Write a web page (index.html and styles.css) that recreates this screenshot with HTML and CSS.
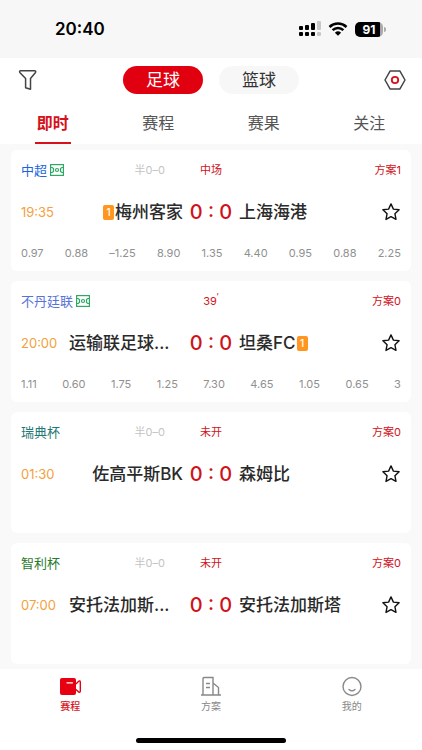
FILE: index.html
```html
<!DOCTYPE html>
<html lang="zh-CN">
<head>
    <meta charset="UTF-8">
    <meta name="viewport" content="width=device-width, initial-scale=1.0">
    <title>赛程</title>
    <link rel="stylesheet" href="styles.css">
</head>
<body>
    <!-- Shared icons -->
    <svg class="sprite" aria-hidden="true">
        <symbol id="icon-star" viewBox="0 0 20 20">
            <path d="M10 1.900l2.400 5.200 5.700.7-4.200 3.900 1.100 5.700L10 14.600l-5 2.800 1.100-5.700-4.200-3.900 5.700-.7z" fill="none" stroke="#111" stroke-width="1.400" stroke-linejoin="round"/>
        </symbol>
        <symbol id="icon-pitch" viewBox="0 0 14 12">
            <g fill="none" stroke="#2fa866" stroke-width="1.200">
                <rect x=".6" y=".6" width="12.800" height="10.800"/>
                <path d="M.6 3.500h1.600l1.300 1v3l-1.300 1H.6M13.400 3.500h-1.600l-1.300 1v3l1.300 1h1.600"/>
                <circle cx="7" cy="6" r="1.500"/>
            </g>
        </symbol>
    </svg>

    <div class="status-bar">
        <span class="clock">20:40</span>
        <div class="status-icons">
            <svg width="22" height="16" viewBox="0 0 22 16">
                <rect x="0" y="5" width="4" height="4" rx="1"/>
                <rect x="6" y="4" width="4" height="5" rx="1"/>
                <rect x="12" y="2" width="4" height="7" rx="1"/>
                <rect x="18" y="0" width="4" height="9" rx="1" fill="#c8c8c8"/>
                <rect x="0" y="11" width="4" height="4" rx="1"/>
                <rect x="6" y="11" width="4" height="4" rx="1"/>
                <rect x="12" y="11" width="4" height="4" rx="1"/>
                <rect x="18" y="11" width="4" height="4" rx="1" fill="#c8c8c8"/>
            </svg>
            <svg width="20" height="14" viewBox="0 0 20 14">
                <path d="M1.500 5a12.300 12.300 0 0 1 17 0M4.600 8.200a7.800 7.800 0 0 1 10.800 0" fill="none" stroke="#000" stroke-width="2.500"/>
                <path d="M10 13.800L6.900 10.700a4.500 4.500 0 0 1 6.200 0z"/>
            </svg>
            <div class="battery">91</div>
        </div>
    </div>

    <header class="header">
        <div class="toolbar">
            <button class="icon-btn" aria-label="筛选">
                <svg width="22" height="22" viewBox="0 0 22 22">
                    <path d="M4.500 1.800h14.200c.9 0 1.300.9.800 1.600L14.500 9.500v10.800l-4.900-1.600V9.500L3.800 3.400c-.5-.7-.1-1.600.7-1.600z" fill="none" stroke="#444" stroke-width="1.500" stroke-linejoin="round"/>
                </svg>
            </button>
            <div class="sports">
                <button class="sport active">足球</button>
                <button class="sport">篮球</button>
            </div>
            <button class="icon-btn" aria-label="设置">
                <svg width="22" height="22" viewBox="0 0 22 22">
                    <path d="M6.200 1.900h9.600L21 11l-5.200 9.100H6.200L1 11z" fill="none" stroke="#444" stroke-width="1.500" stroke-linejoin="round"/>
                    <circle cx="11" cy="11" r="3.200" fill="none" stroke="#d7111b" stroke-width="1.800"/>
                </svg>
            </button>
        </div>
        <nav class="tabs">
            <a class="tab active" href="#">即时</a>
            <a class="tab" href="#">赛程</a>
            <a class="tab" href="#">赛果</a>
            <a class="tab" href="#">关注</a>
        </nav>
    </header>

    <main class="matches">
        <section class="match">
            <div class="info">
                <div class="info-left">
                    <span class="league league-csl">中超 <svg class="pitch"><use href="#icon-pitch"/></svg></span>
                    <span class="half">半0–0</span>
                </div>
                <span class="state">中场</span>
                <a class="plans" href="#">方案1</a>
            </div>
            <div class="teams">
                <span class="time">19:35</span>
                <span class="team home"><span class="rank">1</span>梅州客家</span>
                <span class="score">0 : 0</span>
                <span class="team">上海海港</span>
                <button class="star" aria-label="关注"><svg><use href="#icon-star"/></svg></button>
            </div>
            <div class="odds">
                <span>0.97</span>
                <span>0.88</span>
                <span>–1.25</span>
                <span>8.90</span>
                <span>1.35</span>
                <span>4.40</span>
                <span>0.95</span>
                <span>0.88</span>
                <span>2.25</span>
            </div>
        </section>

        <section class="match">
            <div class="info">
                <div class="info-left">
                    <span class="league league-bhutan">不丹廷联 <svg class="pitch"><use href="#icon-pitch"/></svg></span>
                </div>
                <span class="state">39<sup class="minute">′</sup></span>
                <a class="plans" href="#">方案0</a>
            </div>
            <div class="teams">
                <span class="time">20:00</span>
                <span class="team">运输联足球...</span>
                <span class="score">0 : 0</span>
                <span class="team">坦桑FC<span class="rank">1</span></span>
                <button class="star" aria-label="关注"><svg><use href="#icon-star"/></svg></button>
            </div>
            <div class="odds">
                <span>1.11</span>
                <span>0.60</span>
                <span>1.75</span>
                <span>1.25</span>
                <span>7.30</span>
                <span>4.65</span>
                <span>1.05</span>
                <span>0.65</span>
                <span>3</span>
            </div>
        </section>

        <section class="match">
            <div class="info">
                <div class="info-left">
                    <span class="league league-sweden">瑞典杯</span>
                    <span class="half">半0–0</span>
                </div>
                <span class="state">未开</span>
                <a class="plans" href="#">方案0</a>
            </div>
            <div class="teams">
                <span class="time">01:30</span>
                <span class="team home">佐高平斯BK</span>
                <span class="score">0 : 0</span>
                <span class="team">森姆比</span>
                <button class="star" aria-label="关注"><svg><use href="#icon-star"/></svg></button>
            </div>
        </section>

        <section class="match">
            <div class="info">
                <div class="info-left">
                    <span class="league league-chile">智利杯</span>
                    <span class="half">半0–0</span>
                </div>
                <span class="state">未开</span>
                <a class="plans" href="#">方案0</a>
            </div>
            <div class="teams">
                <span class="time">07:00</span>
                <span class="team">安托法加斯...</span>
                <span class="score">0 : 0</span>
                <span class="team">安托法加斯塔</span>
                <button class="star" aria-label="关注"><svg><use href="#icon-star"/></svg></button>
            </div>
        </section>
    </main>

    <footer class="footer">
        <nav class="bottom-nav">
            <a class="nav-item active" href="#">
                <svg width="22" height="22" viewBox="0 0 22 22">
                    <rect x="1" y="2" width="16" height="17" rx="2" fill="#e60012"/>
                    <path d="M8 6.800h5.500" stroke="#fff" stroke-width="1.300" stroke-linecap="round"/>
                    <path d="M17 8l2.700-2.800c.6-.6 1.600-.2 1.600.7v9.400c0 .9-1 1.300-1.600.7L17 13.500" fill="none" stroke="#e60012" stroke-width="1.400"/>
                </svg>
                <span>赛程</span>
            </a>
            <a class="nav-item" href="#">
                <svg width="22" height="22" viewBox="0 0 22 22">
                    <path d="M3 19V2.500c0-.6.400-1 1-1h9v17.500M13 7l5.500 4.500V19M1 19h20M6 7.500h4M6 11.500h4" fill="none" stroke="#888" stroke-width="1.400"/>
                </svg>
                <span>方案</span>
            </a>
            <a class="nav-item" href="#">
                <svg width="22" height="22" viewBox="0 0 22 22">
                    <circle cx="11" cy="10.500" r="9" fill="none" stroke="#888" stroke-width="1.400"/>
                    <path d="M8 13.500c1.700 1.500 4.300 1.500 6 0" fill="none" stroke="#888" stroke-width="1.300" stroke-linecap="round"/>
                </svg>
                <span>我的</span>
            </a>
        </nav>
        <div class="home-bar"></div>
    </footer>
</body>
</html>
```

FILE: styles.css
```css
* {
    box-sizing: border-box;
}

body {
    margin: 0;
    min-height: 100vh;
    display: flex;
    flex-direction: column;
    font-family: Inter, "Noto Sans CJK SC", sans-serif;
    line-height: 20px;
    background-color: #f9f9f9;
    color: #2a2a2a;
}

a {
    color: inherit;
    text-decoration: none;
}

button {
    padding: 0;
    border: none;
    background: none;
    font-family: inherit;
    cursor: pointer;
}

svg {
    display: block;
}

.sprite {
    position: absolute;
    width: 0;
    height: 0;
}

/* status bar */
.status-bar {
    display: flex;
    justify-content: space-between;
    align-items: center;
    height: 58px;
    padding: 0 39px 0 55px;
    background-color: #f7f7f7;
    color: #000;
}

.clock {
    font-size: 17px;
    font-weight: 600;
}

.status-icons {
    display: flex;
    align-items: center;
    gap: 7px;
}

.battery {
    position: relative;
    width: 28px;
    height: 15px;
    border-radius: 5px;
    background: linear-gradient(to right, #000 90%, #aaa 90%);
    color: #fff;
    font-size: 12px;
    font-weight: 700;
    line-height: 15px;
    text-align: center;
}

.battery::after {
    content: "";
    position: absolute;
    top: 5px;
    right: -3px;
    width: 2px;
    height: 5px;
    border-radius: 0 2px 2px 0;
    background-color: #aaa;
}

/* header */
.header {
    background-color: #fff;
}

.toolbar {
    display: flex;
    justify-content: space-between;
    align-items: center;
    height: 44px;
    padding: 0 16px;
}

.sports {
    display: flex;
    gap: 16px;
}

.sport {
    width: 80px;
    height: 28px;
    border-radius: 14px;
    background-color: #f7f7f7;
    color: #333;
    font-size: 17px;
    line-height: 28px;
}

.sport.active {
    background-color: #e1000f;
    color: #fff;
}

.tabs {
    display: grid;
    grid-template-columns: repeat(4, 1fr);
    justify-items: center;
}

.tab {
    height: 42px;
    padding: 0 2px;
    border-bottom: 2px solid transparent;
    color: #555;
    font-size: 16px;
    line-height: 42px;
}

.tab.active {
    border-color: #d7111b;
    color: #d7111b;
    font-weight: 600;
}

/* match cards */
.matches {
    flex: 1;
    display: flex;
    flex-direction: column;
    gap: 10px;
    padding: 6px 11px 5px;
}

.match {
    display: grid;
    grid-template-rows: 40px 44px 37px;
    padding: 0 10px;
    border-radius: 6px;
    background-color: #fff;
}

.info {
    display: grid;
    grid-template-columns: 1fr 92px 1fr;
    align-items: center;
    color: #cf1322;
    font-size: 11px;
}

.info-left {
    display: flex;
    justify-content: space-between;
    align-items: center;
}

.league {
    display: flex;
    align-items: center;
    gap: 3px;
    font-size: 13px;
}

.league-csl {
    color: #1a66e0;
}

.league-bhutan {
    color: #5873d8;
}

.league-sweden {
    color: #1f7a74;
}

.league-chile {
    color: #2a7a2e;
}

.pitch {
    width: 14px;
    height: 12px;
}

.half {
    color: #c4c4c4;
}

.state {
    text-align: center;
}

.minute {
    font-size: 9px;
    line-height: 1;
}

.plans {
    text-align: right;
}

.teams {
    display: grid;
    grid-template-columns: 48px 1fr 56px 1fr 48px;
    align-items: center;
}

.time {
    color: #f5a03c;
    font-size: 13px;
}

.team {
    display: flex;
    align-items: center;
    gap: 1px;
    font-size: 17px;
    font-weight: 500;
    white-space: nowrap;
}

.team.home {
    justify-content: flex-end;
}

.rank {
    width: 11px;
    height: 15px;
    border-radius: 2px;
    background-color: #ff9620;
    color: #fff;
    font-size: 10px;
    line-height: 15px;
    text-align: center;
}

.score {
    color: #d0121b;
    font-size: 20px;
    font-weight: 500;
    text-align: center;
    white-space: nowrap;
}

.star {
    justify-self: end;
}

.star svg {
    width: 20px;
    height: 20px;
}

.odds {
    display: flex;
    justify-content: space-between;
    align-items: center;
    color: #909090;
    font-size: 11px;
}

/* bottom navigation */
.footer {
    background-color: #fff;
}

.bottom-nav {
    display: grid;
    grid-template-columns: repeat(3, 1fr);
    padding-top: 7px;
}

.nav-item {
    display: flex;
    flex-direction: column;
    align-items: center;
    color: #888;
    font-size: 10px;
    line-height: 16px;
}

.nav-item.active {
    color: #d7111b;
    font-weight: 500;
}

.home-bar {
    width: 150px;
    height: 5px;
    margin: 24px auto 7px;
    border-radius: 3px;
    background-color: #000;
}
```
